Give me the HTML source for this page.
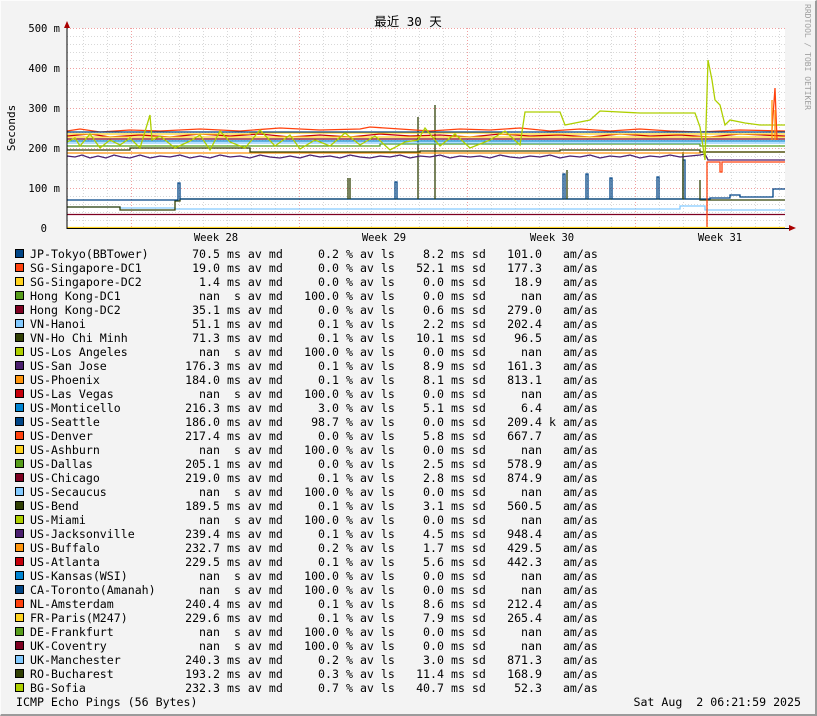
<!DOCTYPE html>
<html><head><meta charset="utf-8"><style>
*{margin:0;padding:0}
body{width:817px;height:716px;background:#f3f3f3;position:relative;overflow:hidden;font-family:"DejaVu Sans Mono","Liberation Mono","Noto Sans CJK SC",monospace;font-size:11.6px;color:#000}
#fr{position:absolute;left:0;top:0;border-right:2px solid #9b9b9b;border-bottom:2px solid #9b9b9b;border-top:1px solid #fcfcfc;border-left:1px solid #fcfcfc;box-sizing:border-box;width:817px;height:716px}
svg{position:absolute;left:0;top:0}
.r{position:absolute;left:1px;height:14px;line-height:14px;width:817px;white-space:pre}
.r span{position:absolute;top:0}
.sq{left:14px;top:2px!important;width:7px;height:7px;border:1px solid #000}
.l{left:29px}
.v{right:598px;text-align:right}
.u{left:219px}
.p{right:479px;text-align:right}
.q{left:338px}
.s{right:374px;text-align:right}
.t{left:443px}
.w{right:276px;text-align:right}
.z{left:541px}
</style></head><body><div id="fr"></div>
<svg width="817" height="716" xmlns="http://www.w3.org/2000/svg">
<rect x="67" y="28" width="718" height="200" fill="#fff"/>
<g stroke="#d8d8d8" stroke-dasharray="1,2" stroke-width="1">
<path d="M67 36.5H785M67 44.5H785M67 52.5H785M67 60.5H785M67 76.5H785M67 84.5H785M67 92.5H785M67 100.5H785M67 116.5H785M67 124.5H785M67 132.5H785M67 140.5H785M67 156.5H785M67 164.5H785M67 172.5H785M67 180.5H785M67 196.5H785M67 204.5H785M67 212.5H785M67 220.5H785"/>
<path d="M83.5 28V228M107.5 28V228M155.5 28V228M179.5 28V228M203.5 28V228M227.5 28V228M251.5 28V228M275.5 28V228M323.5 28V228M347.5 28V228M371.5 28V228M395.5 28V228M419.5 28V228M443.5 28V228M491.5 28V228M515.5 28V228M539.5 28V228M563.5 28V228M587.5 28V228M611.5 28V228M659.5 28V228M683.5 28V228M707.5 28V228M731.5 28V228M755.5 28V228M779.5 28V228"/>
</g>
<g stroke="#f0a0a0" stroke-dasharray="1,2" stroke-width="1">
<path d="M67 28.5H785M67 68.5H785M67 108.5H785M67 148.5H785M67 188.5H785"/>
<path d="M131.5 28V228M299.5 28V228M467.5 28V228M635.5 28V228"/>
</g>
<g fill="none" stroke-width="1.3">
<path stroke="#7e0021" d="M67 214.5H785"/>
<path stroke="#83caff" d="M67 207H120V208H175V209H680V206H705V210H785"/>
<path stroke="#314004" d="M67 207H120V210H175V201H180V199H560V199H700V200H708V200H785"/>
<path stroke="#004586" d="M67 200H178V183H180V199H395V182H397V199H563V174H565V199H586V174H588V199H610V178H612V199H657V177H659V199H683V160H685V199H710V198H730V195H740V197H773V189H785"/>
<path stroke="#314004" d="M348 199V178M350 199V178M567 199V170M683 199V152M700 199V180M418 199V117M435 199V105"/>
<path stroke="#4b1f6f" d="M67 156L75 157 82 155 90 158 98 156 106 158 114 155 122 157 130 158 140 155 150 158 160 156 170 157 180 155 190 158 200 156 210 158 220 155 230 157 240 156 250 158 260 155 270 157 280 158 290 156 300 158 310 155 320 157 330 156 340 158 350 155 360 157 370 158 380 156 390 157 400 155 410 158 420 156 430 157 440 155 450 158 460 156 470 157 480 156 490 158 500 155 510 157 520 158 530 156 540 157 550 155 560 158 570 156 580 157 590 155 600 158 610 156 620 157 630 155 640 158 650 156 660 157 670 155 680 157 690 156 700 155 705 154 708 160H785"/>
<path stroke="#ff950e" d="M67 153H700V152H785"/>
<path stroke="#314004" d="M67 150H130V148H250V152H420V151H560V150H700V152H785"/>
<path stroke="#579d1c" d="M67 146H380V144H700V146H785"/>
<path stroke="#83caff" d="M67 143H785"/>
<path stroke="#0084d1" d="M67 141H785"/>
<path stroke="#7e0021" d="M67 139H785"/>
<path stroke="#c5000b" d="M67 136L90 134 110 137 140 135 170 137 200 134 230 136 260 134 290 137 320 135 350 137 380 134 410 136 440 135 470 137 500 134 530 136 560 135 590 137 620 134 650 136 680 135 710 137 740 134 785 136"/>
<path stroke="#ffd320" d="M67 134H250V133H500V134H785"/>
<path stroke="#ff420e" d="M67 131L80 129 100 132 130 130 160 131 200 129 240 131 280 128 320 130 360 129 370 127 400 129 430 131 460 129 490 130 520 128 550 131 580 129 610 131 640 129 670 131 700 132 740 130 785 131"/>
<path stroke="#004586" d="M67 132H785"/>
<path stroke="#ffd320" d="M67 137H785"/>
<path stroke="#aecf00" d="M67 142L75 138 80 146 90 134 100 148 110 140 120 145 130 138 140 148 150 115 152 140 160 136 175 148 190 141 200 135 210 150 220 131 230 142 245 148 260 130 275 146 290 135 300 149 315 140 330 146 345 133 360 145 375 136 390 150 405 142 418 140 425 128 440 146 455 134 470 148 490 140 505 131 520 145 525 112 560 112 565 125 590 120 600 111 640 113 695 113 700 127 705 160 708 60 712 80 715 100 720 105 725 125 730 120 745 123 760 125 785 125"/>
<path stroke="#ff420e" d="M707 228V162H720V172H722V162H785M772 130L775 88 777 140"/>
<path stroke="#ff950e" d="M772 140V100M775 140V110"/>
<path stroke="#ffd320" d="M67 227.5H785"/>
</g>
<path d="M67 22V229M67 228.5H791" stroke="#000" stroke-width="1" fill="none"/>
<path d="M64 28L67 21L70 28Z" fill="#a00"/>
<path d="M789 225L796 228L789 231Z" fill="#a00"/>
<g font-family="DejaVu Sans Mono,Liberation Mono,monospace" font-size="10.5" text-anchor="end">
<text x="60" y="32">500 m</text><text x="60" y="72">400 m</text><text x="60" y="112">300 m</text><text x="60" y="152">200 m</text><text x="60" y="192">100 m</text><text x="47" y="232">0</text>
</g>
<g font-family="DejaVu Sans Mono,Liberation Mono,monospace" font-size="10.5" text-anchor="middle">
<text x="216" y="241">Week 28</text><text x="384" y="241">Week 29</text><text x="552" y="241">Week 30</text><text x="720" y="241">Week 31</text>
</g>
<text x="408" y="26" text-anchor="middle" font-family="DejaVu Sans Mono,Noto Sans CJK SC,monospace" font-size="12.5" xml:space="preserve">最近 30 天</text>
<text transform="translate(15 128) rotate(-90)" text-anchor="middle" font-family="DejaVu Sans Mono,monospace" font-size="11">Seconds</text>
<text transform="translate(805 4) rotate(90)" font-family="DejaVu Sans Mono,monospace" font-size="8" fill="#a0a0a0">RRDTOOL / TOBI OETIKER</text>
</svg>
<div class="r" style="top:247px"><span class="sq" style="background:#004586"></span><span class="l">JP-Tokyo(BBTower)</span><span class="v">70.5</span><span class="u"> ms av md</span><span class="p">0.2</span><span class="q"> % av ls</span><span class="s">8.2</span><span class="t"> ms sd</span><span class="w">101.0</span><span class="z">   am/as</span></div>
<div class="r" style="top:261px"><span class="sq" style="background:#ff420e"></span><span class="l">SG-Singapore-DC1</span><span class="v">19.0</span><span class="u"> ms av md</span><span class="p">0.0</span><span class="q"> % av ls</span><span class="s">52.1</span><span class="t"> ms sd</span><span class="w">177.3</span><span class="z">   am/as</span></div>
<div class="r" style="top:275px"><span class="sq" style="background:#ffd320"></span><span class="l">SG-Singapore-DC2</span><span class="v">1.4</span><span class="u"> ms av md</span><span class="p">0.0</span><span class="q"> % av ls</span><span class="s">0.0</span><span class="t"> ms sd</span><span class="w">18.9</span><span class="z">   am/as</span></div>
<div class="r" style="top:289px"><span class="sq" style="background:#579d1c"></span><span class="l">Hong Kong-DC1</span><span class="v">nan</span><span class="u">  s av md</span><span class="p">100.0</span><span class="q"> % av ls</span><span class="s">0.0</span><span class="t"> ms sd</span><span class="w">nan</span><span class="z">   am/as</span></div>
<div class="r" style="top:303px"><span class="sq" style="background:#7e0021"></span><span class="l">Hong Kong-DC2</span><span class="v">35.1</span><span class="u"> ms av md</span><span class="p">0.0</span><span class="q"> % av ls</span><span class="s">0.6</span><span class="t"> ms sd</span><span class="w">279.0</span><span class="z">   am/as</span></div>
<div class="r" style="top:317px"><span class="sq" style="background:#83caff"></span><span class="l">VN-Hanoi</span><span class="v">51.1</span><span class="u"> ms av md</span><span class="p">0.1</span><span class="q"> % av ls</span><span class="s">2.2</span><span class="t"> ms sd</span><span class="w">202.4</span><span class="z">   am/as</span></div>
<div class="r" style="top:331px"><span class="sq" style="background:#314004"></span><span class="l">VN-Ho Chi Minh</span><span class="v">71.3</span><span class="u"> ms av md</span><span class="p">0.1</span><span class="q"> % av ls</span><span class="s">10.1</span><span class="t"> ms sd</span><span class="w">96.5</span><span class="z">   am/as</span></div>
<div class="r" style="top:345px"><span class="sq" style="background:#aecf00"></span><span class="l">US-Los Angeles</span><span class="v">nan</span><span class="u">  s av md</span><span class="p">100.0</span><span class="q"> % av ls</span><span class="s">0.0</span><span class="t"> ms sd</span><span class="w">nan</span><span class="z">   am/as</span></div>
<div class="r" style="top:359px"><span class="sq" style="background:#4b1f6f"></span><span class="l">US-San Jose</span><span class="v">176.3</span><span class="u"> ms av md</span><span class="p">0.1</span><span class="q"> % av ls</span><span class="s">8.9</span><span class="t"> ms sd</span><span class="w">161.3</span><span class="z">   am/as</span></div>
<div class="r" style="top:373px"><span class="sq" style="background:#ff950e"></span><span class="l">US-Phoenix</span><span class="v">184.0</span><span class="u"> ms av md</span><span class="p">0.1</span><span class="q"> % av ls</span><span class="s">8.1</span><span class="t"> ms sd</span><span class="w">813.1</span><span class="z">   am/as</span></div>
<div class="r" style="top:387px"><span class="sq" style="background:#c5000b"></span><span class="l">US-Las Vegas</span><span class="v">nan</span><span class="u">  s av md</span><span class="p">100.0</span><span class="q"> % av ls</span><span class="s">0.0</span><span class="t"> ms sd</span><span class="w">nan</span><span class="z">   am/as</span></div>
<div class="r" style="top:401px"><span class="sq" style="background:#0084d1"></span><span class="l">US-Monticello</span><span class="v">216.3</span><span class="u"> ms av md</span><span class="p">3.0</span><span class="q"> % av ls</span><span class="s">5.1</span><span class="t"> ms sd</span><span class="w">6.4</span><span class="z">   am/as</span></div>
<div class="r" style="top:415px"><span class="sq" style="background:#004586"></span><span class="l">US-Seattle</span><span class="v">186.0</span><span class="u"> ms av md</span><span class="p">98.7</span><span class="q"> % av ls</span><span class="s">0.0</span><span class="t"> ms sd</span><span class="w">209.4</span><span class="z"> k am/as</span></div>
<div class="r" style="top:429px"><span class="sq" style="background:#ff420e"></span><span class="l">US-Denver</span><span class="v">217.4</span><span class="u"> ms av md</span><span class="p">0.0</span><span class="q"> % av ls</span><span class="s">5.8</span><span class="t"> ms sd</span><span class="w">667.7</span><span class="z">   am/as</span></div>
<div class="r" style="top:443px"><span class="sq" style="background:#ffd320"></span><span class="l">US-Ashburn</span><span class="v">nan</span><span class="u">  s av md</span><span class="p">100.0</span><span class="q"> % av ls</span><span class="s">0.0</span><span class="t"> ms sd</span><span class="w">nan</span><span class="z">   am/as</span></div>
<div class="r" style="top:457px"><span class="sq" style="background:#579d1c"></span><span class="l">US-Dallas</span><span class="v">205.1</span><span class="u"> ms av md</span><span class="p">0.0</span><span class="q"> % av ls</span><span class="s">2.5</span><span class="t"> ms sd</span><span class="w">578.9</span><span class="z">   am/as</span></div>
<div class="r" style="top:471px"><span class="sq" style="background:#7e0021"></span><span class="l">US-Chicago</span><span class="v">219.0</span><span class="u"> ms av md</span><span class="p">0.1</span><span class="q"> % av ls</span><span class="s">2.8</span><span class="t"> ms sd</span><span class="w">874.9</span><span class="z">   am/as</span></div>
<div class="r" style="top:485px"><span class="sq" style="background:#83caff"></span><span class="l">US-Secaucus</span><span class="v">nan</span><span class="u">  s av md</span><span class="p">100.0</span><span class="q"> % av ls</span><span class="s">0.0</span><span class="t"> ms sd</span><span class="w">nan</span><span class="z">   am/as</span></div>
<div class="r" style="top:499px"><span class="sq" style="background:#314004"></span><span class="l">US-Bend</span><span class="v">189.5</span><span class="u"> ms av md</span><span class="p">0.1</span><span class="q"> % av ls</span><span class="s">3.1</span><span class="t"> ms sd</span><span class="w">560.5</span><span class="z">   am/as</span></div>
<div class="r" style="top:513px"><span class="sq" style="background:#aecf00"></span><span class="l">US-Miami</span><span class="v">nan</span><span class="u">  s av md</span><span class="p">100.0</span><span class="q"> % av ls</span><span class="s">0.0</span><span class="t"> ms sd</span><span class="w">nan</span><span class="z">   am/as</span></div>
<div class="r" style="top:527px"><span class="sq" style="background:#4b1f6f"></span><span class="l">US-Jacksonville</span><span class="v">239.4</span><span class="u"> ms av md</span><span class="p">0.1</span><span class="q"> % av ls</span><span class="s">4.5</span><span class="t"> ms sd</span><span class="w">948.4</span><span class="z">   am/as</span></div>
<div class="r" style="top:541px"><span class="sq" style="background:#ff950e"></span><span class="l">US-Buffalo</span><span class="v">232.7</span><span class="u"> ms av md</span><span class="p">0.2</span><span class="q"> % av ls</span><span class="s">1.7</span><span class="t"> ms sd</span><span class="w">429.5</span><span class="z">   am/as</span></div>
<div class="r" style="top:555px"><span class="sq" style="background:#c5000b"></span><span class="l">US-Atlanta</span><span class="v">229.5</span><span class="u"> ms av md</span><span class="p">0.1</span><span class="q"> % av ls</span><span class="s">5.6</span><span class="t"> ms sd</span><span class="w">442.3</span><span class="z">   am/as</span></div>
<div class="r" style="top:569px"><span class="sq" style="background:#0084d1"></span><span class="l">US-Kansas(WSI)</span><span class="v">nan</span><span class="u">  s av md</span><span class="p">100.0</span><span class="q"> % av ls</span><span class="s">0.0</span><span class="t"> ms sd</span><span class="w">nan</span><span class="z">   am/as</span></div>
<div class="r" style="top:583px"><span class="sq" style="background:#004586"></span><span class="l">CA-Toronto(Amanah)</span><span class="v">nan</span><span class="u">  s av md</span><span class="p">100.0</span><span class="q"> % av ls</span><span class="s">0.0</span><span class="t"> ms sd</span><span class="w">nan</span><span class="z">   am/as</span></div>
<div class="r" style="top:597px"><span class="sq" style="background:#ff420e"></span><span class="l">NL-Amsterdam</span><span class="v">240.4</span><span class="u"> ms av md</span><span class="p">0.1</span><span class="q"> % av ls</span><span class="s">8.6</span><span class="t"> ms sd</span><span class="w">212.4</span><span class="z">   am/as</span></div>
<div class="r" style="top:611px"><span class="sq" style="background:#ffd320"></span><span class="l">FR-Paris(M247)</span><span class="v">229.6</span><span class="u"> ms av md</span><span class="p">0.1</span><span class="q"> % av ls</span><span class="s">7.9</span><span class="t"> ms sd</span><span class="w">265.4</span><span class="z">   am/as</span></div>
<div class="r" style="top:625px"><span class="sq" style="background:#579d1c"></span><span class="l">DE-Frankfurt</span><span class="v">nan</span><span class="u">  s av md</span><span class="p">100.0</span><span class="q"> % av ls</span><span class="s">0.0</span><span class="t"> ms sd</span><span class="w">nan</span><span class="z">   am/as</span></div>
<div class="r" style="top:639px"><span class="sq" style="background:#7e0021"></span><span class="l">UK-Coventry</span><span class="v">nan</span><span class="u">  s av md</span><span class="p">100.0</span><span class="q"> % av ls</span><span class="s">0.0</span><span class="t"> ms sd</span><span class="w">nan</span><span class="z">   am/as</span></div>
<div class="r" style="top:653px"><span class="sq" style="background:#83caff"></span><span class="l">UK-Manchester</span><span class="v">240.3</span><span class="u"> ms av md</span><span class="p">0.2</span><span class="q"> % av ls</span><span class="s">3.0</span><span class="t"> ms sd</span><span class="w">871.3</span><span class="z">   am/as</span></div>
<div class="r" style="top:667px"><span class="sq" style="background:#314004"></span><span class="l">RO-Bucharest</span><span class="v">193.2</span><span class="u"> ms av md</span><span class="p">0.3</span><span class="q"> % av ls</span><span class="s">11.4</span><span class="t"> ms sd</span><span class="w">168.9</span><span class="z">   am/as</span></div>
<div class="r" style="top:681px"><span class="sq" style="background:#aecf00"></span><span class="l">BG-Sofia</span><span class="v">232.3</span><span class="u"> ms av md</span><span class="p">0.7</span><span class="q"> % av ls</span><span class="s">40.7</span><span class="t"> ms sd</span><span class="w">52.3</span><span class="z">   am/as</span></div>
<div class="r" style="top:695px"><span style="left:15px">ICMP Echo Pings (56 Bytes)</span><span style="right:17px">Sat Aug  2 06:21:59 2025</span></div>
</body></html>
